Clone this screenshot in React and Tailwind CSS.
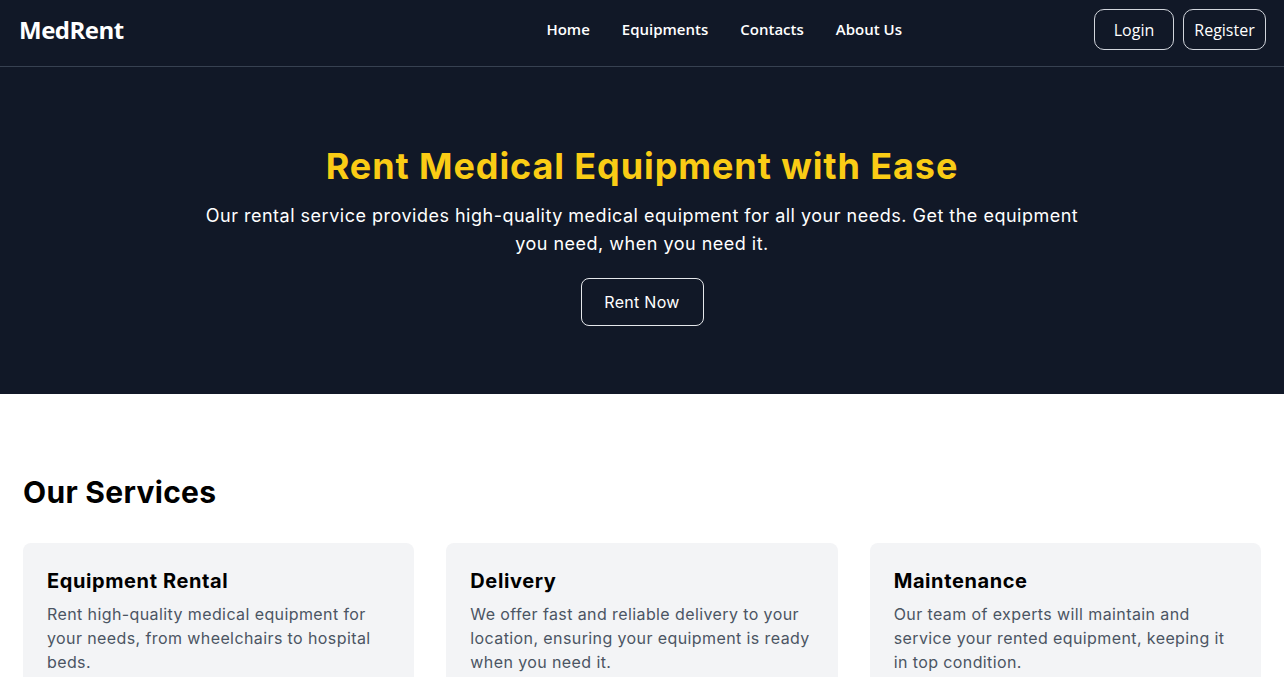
export default function App() {
  const poppins = { fontFamily: "Inter, 'Noto Sans', sans-serif" };
  const cards = [
    { t: "Equipment Rental", d: "Rent high-quality medical equipment for your needs, from wheelchairs to hospital beds." },
    { t: "Delivery", d: "We offer fast and reliable delivery to your location, ensuring your equipment is ready when you need it." },
    { t: "Maintenance", d: "Our team of experts will maintain and service your rented equipment, keeping it in top condition." },
  ];
  return (
    <div className="min-h-screen bg-white" style={poppins}>
      <header className="h-[67px] bg-[#111827] border-b border-[#374151] flex items-center pl-[19px] pr-[18px] pb-[7px] text-white">
        <div className="text-[24px] font-bold tracking-[-0.5px]" style={{ fontFamily: "'Open Sans', sans-serif" }}>MedRent</div>
        <nav className="ml-auto flex gap-8 text-[15px] font-semibold" style={{ fontFamily: "'Open Sans', sans-serif" }}>
          <a>Home</a>
          <a>Equipments</a>
          <a>Contacts</a>
          <a>About Us</a>
        </nav>
        <div className="ml-[192px] flex gap-[9px] text-[16px]" style={{ fontFamily: "'Open Sans', sans-serif" }}>
          <button className="h-[41px] w-[80px] rounded-[10px] border border-gray-300">Login</button>
          <button className="h-[41px] w-[83px] rounded-[10px] border border-gray-300">Register</button>
        </div>
      </header>
      <section className="bg-[#111827] pt-[79px] pb-[68px] flex flex-col items-center text-center">
        <h1 className="text-[36px] leading-[40px] font-bold tracking-[0.9px] text-[#facc15] mb-4">Rent Medical Equipment with Ease</h1>
        <p className="text-[18px] leading-[28px] tracking-[0.5px] text-white max-w-[896px] mb-5">
          Our rental service provides high-quality medical equipment for all your needs. Get the equipment you need, when you need it.
        </p>
        <button className="h-[48px] w-[123px] rounded-lg border border-gray-200 text-white text-[16px] tracking-[0.3px]">Rent Now</button>
      </section>
      <section className="pt-20 px-[23px]">
        <h2 className="text-[30px] leading-[36px] font-bold tracking-[0.3px] text-black mb-8">Our Services</h2>
        <div className="grid grid-cols-3 gap-8 pt-px">
          {cards.map((c) => (
            <div key={c.t} className="bg-[#f3f4f6] rounded-lg p-6">
              <h3 className="text-[20px] leading-[28px] font-bold tracking-[0.6px] text-black mb-[7px]">{c.t}</h3>
              <p className="text-[16px] leading-[24px] tracking-[0.4px] text-[#4b5563]">{c.d}</p>
            </div>
          ))}
        </div>
      </section>
    </div>
  );
}
